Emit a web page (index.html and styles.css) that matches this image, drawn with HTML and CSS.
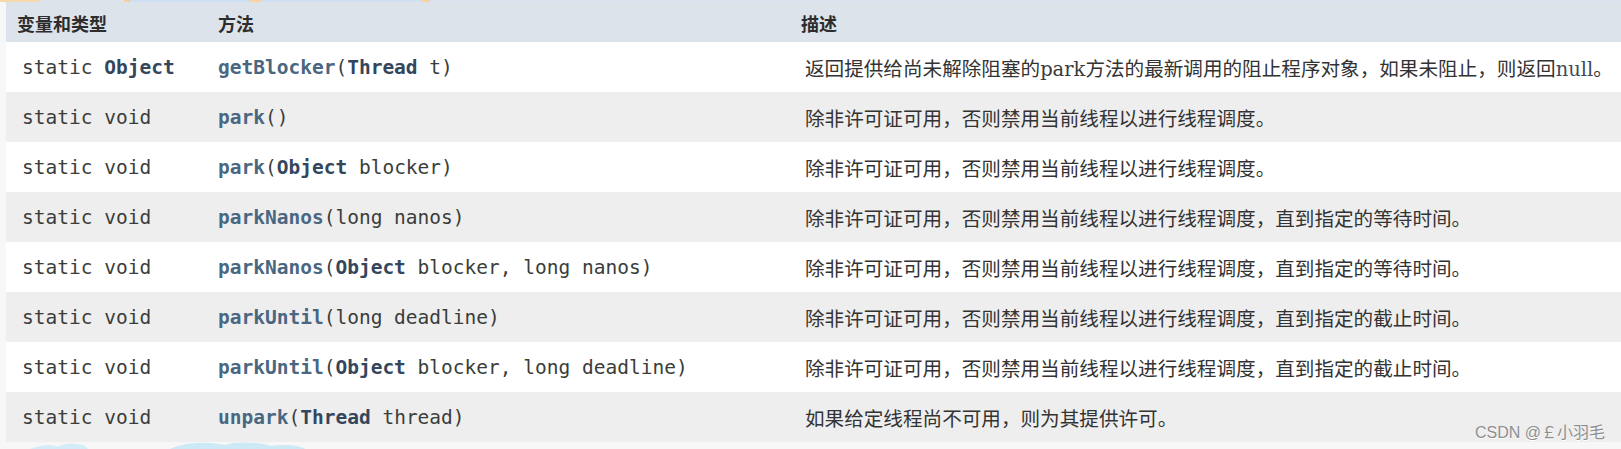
FILE: index.html
```html
<!DOCTYPE html>
<html lang="zh">
<head>
<meta charset="utf-8">
<title>LockSupport</title>
<link rel="stylesheet" href="styles.css">
</head>
<body>
<div class="page">
  <div class="topstrip">
    <span class="seg s1"></span><span class="seg s2"></span><span class="seg s3"></span><span class="seg s4"></span><span class="seg s5"></span><span class="seg s6"></span><span class="seg s7"></span>
  </div>
  <div class="table">
    <div class="row head">
      <div class="cell c1">变量和类型</div>
      <div class="cell c2">方法</div>
      <div class="cell c3">描述</div>
    </div>
    <div class="row odd">
      <div class="cell c1 code">static <b class="type">Object</b></div>
      <div class="cell c2 code"><b class="m">getBlocker</b>(<b class="type">Thread</b> t)</div>
      <div class="cell c3 desc">返回提供给尚未解除阻塞的<span class="lat">park</span>方法的最新调用的阻止程序对象，如果未阻止，则返回<span class="lat nul">null</span>。</div>
    </div>
    <div class="row even">
      <div class="cell c1 code">static void</div>
      <div class="cell c2 code"><b class="m">park</b>()</div>
      <div class="cell c3 desc">除非许可证可用，否则禁用当前线程以进行线程调度。</div>
    </div>
    <div class="row odd">
      <div class="cell c1 code">static void</div>
      <div class="cell c2 code"><b class="m">park</b>(<b class="type">Object</b> blocker)</div>
      <div class="cell c3 desc">除非许可证可用，否则禁用当前线程以进行线程调度。</div>
    </div>
    <div class="row even">
      <div class="cell c1 code">static void</div>
      <div class="cell c2 code"><b class="m">parkNanos</b>(long nanos)</div>
      <div class="cell c3 desc">除非许可证可用，否则禁用当前线程以进行线程调度，直到指定的等待时间。</div>
    </div>
    <div class="row odd">
      <div class="cell c1 code">static void</div>
      <div class="cell c2 code"><b class="m">parkNanos</b>(<b class="type">Object</b> blocker, long nanos)</div>
      <div class="cell c3 desc">除非许可证可用，否则禁用当前线程以进行线程调度，直到指定的等待时间。</div>
    </div>
    <div class="row even">
      <div class="cell c1 code">static void</div>
      <div class="cell c2 code"><b class="m">parkUntil</b>(long deadline)</div>
      <div class="cell c3 desc">除非许可证可用，否则禁用当前线程以进行线程调度，直到指定的截止时间。</div>
    </div>
    <div class="row odd">
      <div class="cell c1 code">static void</div>
      <div class="cell c2 code"><b class="m">parkUntil</b>(<b class="type">Object</b> blocker, long deadline)</div>
      <div class="cell c3 desc">除非许可证可用，否则禁用当前线程以进行线程调度，直到指定的截止时间。</div>
    </div>
    <div class="row even">
      <div class="cell c1 code">static void</div>
      <div class="cell c2 code"><b class="m">unpark</b>(<b class="type">Thread</b> thread)</div>
      <div class="cell c3 desc">如果给定线程尚不可用，则为其提供许可。</div>
    </div>
  </div>
  <div class="bottom">
    <svg class="clouds" width="320" height="7" viewBox="0 0 320 7">
      <path d="M30 7 C40 3 50 2 60 5 L60 7 Z" fill="#d3ecf8"/>
      <path d="M55 7 C62 1 75 0 85 4 L88 7 Z" fill="#d3ecf8"/>
      <path d="M170 7 C185 0 205 -1 225 3 C235 -1 260 0 270 4 C285 2 300 3 305 7 Z" fill="#cde9f6"/>
    </svg>
  </div>
  <div class="watermark">CSDN @￡小羽毛</div>
</div>
</body>
</html>
```
FILE: styles.css
```css
html, body {
  margin: 0;
  padding: 0;
}
body {
  background: #f7f7f7;
  width: 1621px;
  height: 449px;
  overflow: hidden;
}
.page {
  position: relative;
  width: 1621px;
  height: 449px;
}
.topstrip {
  height: 2px;
  display: flex;
  background: #dbe4ee;
}
.seg { display: block; height: 2px; }
.s1 { width: 40px; background: #f7d9ae; }
.s2 { width: 84px; background: #dde4ec; }
.s3 { width: 6px; background: #f5cf9c; }
.s4 { width: 120px; background: #cfdff3; }
.s5 { width: 12px; background: #f6d3a2; }
.s6 { width: 160px; background: #d0e0f2; }
.s7 { width: 8px; background: #f6d3a2; }
.table {
  margin-left: 6px;
  display: flex;
  flex-direction: column;
}
.row {
  display: grid;
  grid-template-columns: 196px 587px 1fr;
  align-items: center;
  height: 50px;
}
.row.head {
  height: 40px;
  background: #dde3ea;
  font-family: "Noto Sans CJK SC", sans-serif;
  font-weight: 700;
  font-size: 18px;
  color: #2d2d2d;
  padding-top: 2px;
  box-sizing: border-box;
}
.row.odd { background: #ffffff; }
.row.even { background: #eeeeef; }
.cell {
  padding-left: 16px;
  white-space: nowrap;
}
.row.head .c1 { padding-left: 11px; }
.row.head .c3 { padding-left: 12px; }
.code {
  font-family: "DejaVu Sans Mono", monospace;
  font-size: 19.5px;
  color: #3a3d3a;
}
.code b { font-weight: 700; }
.type { color: #34465c; }
.m { color: #4a6782; }
.desc {
  font-family: "Noto Sans CJK SC", sans-serif;
  font-size: 19.6px;
  color: #333333;
}
.lat {
  font-family: "DejaVu Serif", serif;
  font-size: 19.5px;
  color: #3a3a3a;
}
.nul { color: #3f4a5a; }
.bottom {
  height: 7px;
  background: #f7f7f7;
}
.clouds { display: block; }
.watermark {
  position: absolute;
  right: 16px;
  top: 419px;
  font-family: "Liberation Sans", "Noto Sans CJK SC", sans-serif;
  font-size: 16px;
  color: #8e8e8e;
  text-shadow: 0 1px 0 #ffffff;
}
```
